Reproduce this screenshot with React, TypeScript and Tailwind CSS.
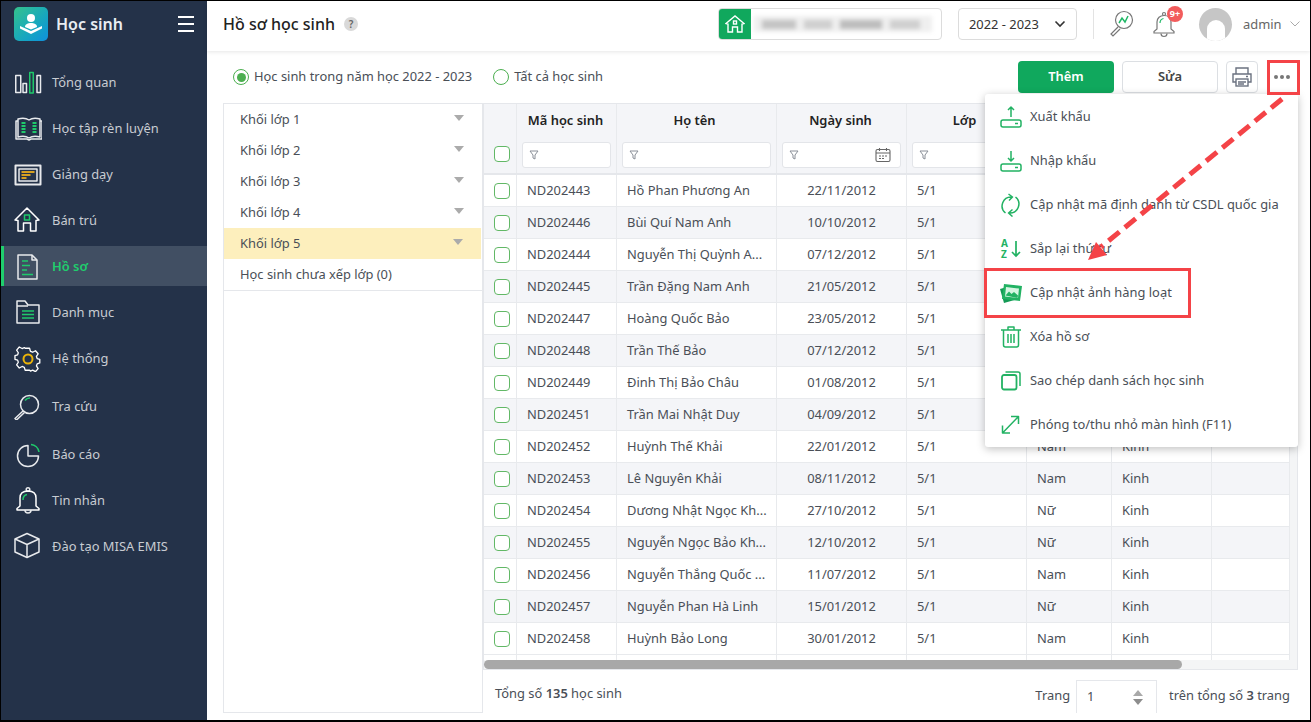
import type { ReactNode } from 'react'

const W = '#e8eaed'
const G = '#1fc96b'

function Svg({ size = 28, children }: { size?: number; children: ReactNode }) {
  return (
    <svg width={size} height={size} viewBox={`0 0 ${size} ${size}`} fill="none" strokeWidth="1.5" strokeLinejoin="round">
      {children}
    </svg>
  )
}

const navIcons: Record<string, ReactNode> = {
  overview: (
    <Svg>
      <rect x="1.75" y="7.5" width="5" height="17" stroke={W} />
      <rect x="9" y="15.5" width="3.5" height="9" stroke={W} />
      <rect x="15.75" y="4.5" width="3.5" height="20.5" stroke={G} />
      <rect x="23" y="7.5" width="3.5" height="17" stroke={W} />
    </Svg>
  ),
  study: (
    <Svg>
      <g transform="translate(1 2)">
        <path d="M3 5h-2v18h11l2 1 2-1h11V5h-2" stroke={W} />
        <path d="M3 3c4-1 8-1 11 1 3-2 7-2 11-1v18c-4-1-8-1-11 1-3-2-7-2-11-1z" stroke={W} />
        <path d="M6.5 7h4M6.5 10h4M6.5 13h4M6.5 16h4M17.5 7h4M17.5 10h4M17.5 13h4M17.5 16h4" stroke={G} strokeWidth="2" />
      </g>
    </Svg>
  ),
  teach: (
    <Svg>
      <rect x="1.5" y="5.5" width="25" height="19" stroke={W} strokeWidth="2" />
      <rect x="5" y="9" width="18" height="12" stroke={W} />
      <path d="M7.500 12h13M7.500 15h9M7.500 18h5" stroke="#d5a021" strokeWidth="2" />
    </Svg>
  ),
  boarding: (
    <Svg>
      <path d="M1 14 13 2 25 14l-3 .5V25h-5.500v-8h-7v8H4V14.500z" stroke="#fff" />
      <rect x="10.500" y="9" width="5" height="5" stroke={G} />
    </Svg>
  ),
  profile: (
    <Svg>
      <g transform="translate(0 1)">
        <path d="M4 2h14l5 5v19H4z" stroke={W} />
        <path d="M18 2v5h5" stroke={W} />
        <path d="M8 8h6M8 12.500h8M8 17h5M8 21.500h11" stroke={G} />
      </g>
    </Svg>
  ),
  category: (
    <Svg>
      <g transform="translate(-1 0)">
        <path d="M4 3h8l3 4h11v18H4z" stroke={W} />
        <path d="M4 8h11" stroke={W} />
        <path d="M9 13h12M9 16.500h12M9 20h12" stroke={G} />
      </g>
    </Svg>
  ),
  system: (
    <Svg>
      <g transform="translate(0 1)">
        <path
          d="M11 2h5l1 3.500 2.500 1 3.200-1.700 3 3.500-1.900 3 .8 2.400 3 1v4l-3 1-.8 2.400 1.900 3-3 3.500-3.200-1.700-2.500 1L16 27h-5l-1-3.300-2.500-1-3.200 1.700-3-3.500 1.900-3-.8-2.400-3-1v-4l3-1 .8-2.400-1.900-3 3-3.500 3.200 1.700 2.500-1z"
          transform="translate(1.500 1.500) scale(.88)"
          stroke="#fff"
        />
        <circle cx="14" cy="14" r="4.500" stroke="#eab308" strokeWidth="2" />
      </g>
    </Svg>
  ),
  search: (
    <Svg>
      <g transform="translate(-1 2)">
        <circle cx="16.500" cy="10.500" r="9" stroke={W} />
        <path d="M12 6.500a6 6 0 0 1 5-2.500" stroke={G} />
        <path d="M10 17 2 24.500 3.500 26l8-7.500" stroke={W} />
      </g>
    </Svg>
  ),
  report: (
    <Svg>
      <path d="M14 5.500a10.500 10.500 0 1 0 10.500 10.500H14z" stroke={W} />
      <path d="M17 4.500a9 9 0 0 1 8 7.500" stroke={G} />
    </Svg>
  ),
  message: (
    <Svg>
      <circle cx="14" cy="3.500" r="1.800" stroke={W} />
      <path d="M6 20v-8c0-5 3.500-7 8-7s8 2 8 7v8l3 2.500v1.500H3v-1.500z" stroke="#fff" />
      <path d="M11 24c0 2 1.500 3 3 3s3-1 3-3" stroke={W} />
      <path d="M9 14c0-3 1.500-5 4-5.500" stroke={G} />
    </Svg>
  ),
  training: (
    <Svg>
      <path d="M13 1.500 25 7v13L13 25.500 1 20V7z" stroke={W} />
      <path d="M1 7 13 12.500 25 7M13 12.500v13" stroke={W} />
    </Svg>
  ),
}

const navItems = [
  { label: 'Tổng quan', icon: 'overview' },
  { label: 'Học tập rèn luyện', icon: 'study' },
  { label: 'Giảng dạy', icon: 'teach' },
  { label: 'Bán trú', icon: 'boarding' },
  { label: 'Hồ sơ', icon: 'profile', active: true },
  { label: 'Danh mục', icon: 'category' },
  { label: 'Hệ thống', icon: 'system' },
  { label: 'Tra cứu', icon: 'search', shift: true },
  { label: 'Báo cáo', icon: 'report', shift: true },
  { label: 'Tin nhắn', icon: 'message' },
  { label: 'Đào tạo MISA EMIS', icon: 'training' },
]

const students = [
  ['ND202443', 'Hồ Phan Phương An', '22/11/2012', 'Nữ'],
  ['ND202446', 'Bùi Quí Nam Anh', '10/10/2012', 'Nam'],
  ['ND202444', 'Nguyễn Thị Quỳnh A...', '07/12/2012', 'Nữ'],
  ['ND202445', 'Trần Đặng Nam Anh', '21/05/2012', 'Nam'],
  ['ND202447', 'Hoàng Quốc Bảo', '23/05/2012', 'Nam'],
  ['ND202448', 'Trần Thế Bảo', '07/12/2012', 'Nam'],
  ['ND202449', 'Đinh Thị Bảo Châu', '01/08/2012', 'Nữ'],
  ['ND202451', 'Trần Mai Nhật Duy', '04/09/2012', 'Nam'],
  ['ND202452', 'Huỳnh Thế Khải', '22/01/2012', 'Nam'],
  ['ND202453', 'Lê Nguyên Khải', '08/11/2012', 'Nam'],
  ['ND202454', 'Dương Nhật Ngọc Kh...', '27/10/2012', 'Nữ'],
  ['ND202455', 'Nguyễn Ngọc Bảo Kh...', '12/10/2012', 'Nữ'],
  ['ND202456', 'Nguyễn Thắng Quốc ...', '11/07/2012', 'Nam'],
  ['ND202457', 'Nguyễn Phan Hà Linh', '15/01/2012', 'Nữ'],
  ['ND202458', 'Huỳnh Bảo Long', '30/01/2012', 'Nam'],
]

const grades = ['Khối lớp 1', 'Khối lớp 2', 'Khối lớp 3', 'Khối lớp 4', 'Khối lớp 5']

const MG = '#22b263'

const menuItems: { label: string; icon: ReactNode }[] = [
  {
    label: 'Xuất khẩu',
    icon: (
      <Svg size={24}>
        <rect x="2" y="15" width="20" height="7" rx="2" stroke={MG} />
        <path d="M12 12V2M9 5l3-3 3 3M16 18.500h3" stroke={MG} />
      </Svg>
    ),
  },
  {
    label: 'Nhập khẩu',
    icon: (
      <Svg size={24}>
        <rect x="2" y="15" width="20" height="7" rx="2" stroke={MG} />
        <path d="M12 2v10M9 9l3 3 3-3M16 18.500h3" stroke={MG} />
      </Svg>
    ),
  },
  {
    label: 'Cập nhật mã định danh từ CSDL quốc gia',
    icon: (
      <Svg size={24}>
        <path d="M13 4A9 9 0 0 0 7 20M10 1l4 3-3.500 3.500M11 20a9 9 0 0 0 6-16M14 16.500 10 20l4 3.500" stroke={MG} transform="translate(-.5 0)" />
      </Svg>
    ),
  },
  {
    label: 'Sắp lại thứ tự',
    icon: (
      <span className="flex items-center gap-[3px]">
        <span className="flex flex-col text-[10px] leading-[11px] font-bold text-[#22b263]">
          <span>A</span>
          <span>Z</span>
        </span>
        <svg width="10" height="17" viewBox="0 0 10 17" fill="none" stroke={MG} strokeWidth="1.700">
          <path d="M5 0v15M1 11l4 4 4-4" />
        </svg>
      </span>
    ),
  },
  {
    label: 'Cập nhật ảnh hàng loạt',
    icon: (
      <Svg size={24}>
        <path d="M1 8l14-4 4 14-14 4z" fill="#149a55" />
        <path d="M5 3l18 2-2 15-18-2z" fill={MG} />
        <path d="M7 6l13 1.500-1 9.500-13-1.500z" fill="#d6f5e2" />
        <path d="M6.500 14.500l3.500-4 2.500 2.500 2.500-2 4 3.500-.5 2.500z" fill={MG} />
      </Svg>
    ),
  },
  {
    label: 'Xóa hồ sơ',
    icon: (
      <Svg size={24}>
        <path d="M1 5h20M8 5V2h6v3M3.500 5v15a2 2 0 0 0 2 2h11a2 2 0 0 0 2-2V5M8 9v9M11 9v9M14 9v9" stroke={MG} transform="translate(1 0)" />
      </Svg>
    ),
  },
  {
    label: 'Sao chép danh sách học sinh',
    icon: (
      <Svg size={24}>
        <rect x="3" y="6" width="14.500" height="14.500" rx="2" stroke={MG} strokeWidth="1.800" />
        <path d="M6.500 3H19a2 2 0 0 1 2 2v12" stroke={MG} />
      </Svg>
    ),
  },
  {
    label: 'Phóng to/thu nhỏ màn hình (F11)',
    icon: (
      <Svg size={24}>
        <path d="M3.500 20 19 4M12 3.500h7.500V11M3.500 12.500V20H11" stroke={MG} />
      </Svg>
    ),
  },
]

function FilterIcon() {
  return (
    <svg width="10" height="10" viewBox="0 0 10 10" fill="none" stroke="#8a8f98" strokeWidth="1">
      <path d="M1 1h8L6 5v4L4 8V5z" />
    </svg>
  )
}

function Checkbox() {
  return <div className="h-4 w-4 rounded-[4px] border-[1.5px] border-[#62b866] bg-white" />
}

function FilterBox({ children }: { children?: ReactNode }) {
  return (
    <div className="mr-[5px] ml-[5px] flex h-[26px] flex-1 items-center justify-between rounded-[3px] border border-[#e3e5e9] bg-white pr-[10px] pl-[6px]">
      <FilterIcon />
      {children}
    </div>
  )
}

function Sidebar() {
  return (
    <aside className="flex w-[206px] shrink-0 flex-col bg-[#243249]">
      <div className="flex h-[50px] items-center pr-[13px] pb-1 pl-[13px]">
        <div className="flex h-[34px] w-[34px] items-center justify-center rounded-[5px] bg-gradient-to-br from-[#35c28a] to-[#1290dd]">
          <svg width="24" height="24" viewBox="0 0 24 24" fill="#fff">
            <circle cx="12" cy="6" r="4" />
            <path d="M6 15c0-3 3-4 6-4s6 1 6 4l-6 2.500z" />
            <path d="M1 14l11 5 11-5v2.500L12 22 1 16.500z" />
          </svg>
        </div>
        <span className="ml-2 flex-1 text-[16px] font-semibold text-[#e9edf2]">Học sinh</span>
        <div className="flex w-4 flex-col gap-[5px]">
          <div className="h-[2px] bg-white" />
          <div className="h-[2px] bg-white" />
          <div className="h-[2px] bg-white" />
        </div>
      </div>
      <nav className="mt-[11px] flex flex-col gap-[6px]">
        {navItems.map((item) => (
          <div
            key={item.label}
            className={`flex h-10 items-center gap-[10px] text-[12.9px] ${item.shift ? 'mt-[2px]' : ''} ${
              item.active ? 'border-l-[3px] border-[#1fce6d] bg-[#414f63] pl-[10px] font-semibold text-[#1fce6d]' : 'pl-[13px] text-[#c8ccd2]'
            }`}
          >
            <span className="flex w-7 shrink-0 justify-center">{navIcons[item.icon]}</span>
            <span className="mt-[2px]">{item.label}</span>
          </div>
        ))}
      </nav>
    </aside>
  )
}

function Topbar() {
  return (
    <header className="z-10 flex h-[50px] shrink-0 items-center bg-white pb-1 pl-4 shadow-[0_1px_4px_rgba(0,0,0,0.1)]">
      <div className="flex w-[479px] shrink-0 items-center">
        <h1 className="text-[16px] font-medium whitespace-nowrap text-[#222]">Hồ sơ học sinh</h1>
        <span className="ml-[9px] flex h-[14px] w-[14px] items-center justify-center rounded-full bg-[#d9d9d9] text-[10px] font-semibold text-[#666]">
          ?
        </span>
      </div>
      <div className="ml-4 flex h-8 w-[224px] shrink-0 items-center overflow-hidden rounded-[4px] border border-[#dcdcdc]">
        <div className="flex h-full w-[32px] items-center justify-center bg-[#10a85d]">
          <svg width="20" height="20" viewBox="0 0 20 20" fill="none" stroke="#fff" strokeWidth="1.400">
            <path d="M1 9.500 10 2l9 7.500-2 .5v8h-4.500v-5h-5v5H3v-8z" />
            <rect x="8.500" y="7" width="3" height="3" />
          </svg>
        </div>
        <div className="ml-[3px] flex h-4 w-[178px] items-center gap-2 bg-[#efefef] px-2 blur-[2px]">
          <div className="h-[9px] w-[34px] bg-[#c4c4c4]" />
          <div className="h-[9px] w-[28px] bg-[#cfcfcf]" />
          <div className="h-[9px] w-[42px] bg-[#bdbdbd]" />
          <div className="h-[9px] w-[30px] bg-[#cfcfcf]" />
        </div>
      </div>
      <div className="ml-4 flex h-8 w-[119px] shrink-0 items-center justify-between rounded-[4px] border border-[#dcdcdc] pr-[10px] pl-[10px] text-[12.9px] text-[#333]">
        <span className="mt-[2px]">2022 - 2023</span>
        <svg width="12" height="8" viewBox="0 0 12 8" fill="none" stroke="#333" strokeWidth="1.600">
          <path d="M1.500 1.500 6 6l4.500-4.500" />
        </svg>
      </div>
      <div className="ml-4 h-[30px] w-px bg-[#e3e3e3]" />
      <span className="ml-[14px] flex">
        <svg width="26" height="28" viewBox="0 0 26 28" fill="none" stroke="#777" strokeWidth="1.200">
          <circle cx="16" cy="10" r="8.500" />
          <path d="M10 17 3 24l2 2 7-7" />
          <path d="M11 13l3-5 3 4 3-6" stroke="#1fb866" strokeWidth="1.500" />
        </svg>
      </span>
      <span className="relative ml-[17px] flex">
        <svg width="26" height="28" viewBox="0 0 26 28" fill="none" stroke="#777" strokeWidth="1.200">
          <circle cx="13" cy="4" r="1.500" />
          <path d="M6 19v-7c0-4 3-6.500 7-6.500s7 2.500 7 6.500v7l3 2.500V23H3v-1.500z" />
          <path d="M10 23.500c0 2 1.500 3 3 3s3-1 3-3" />
          <path d="M9 13c0-2.500 1.500-4 3.500-4.500" stroke="#1fb866" />
        </svg>
        <span className="absolute -top-[4px] left-[16px] flex h-4 w-4 items-center justify-center rounded-full bg-[#f25c5c] text-[9px] font-bold text-white">
          9+
        </span>
      </span>
      <div className="ml-[22px] flex h-[33px] w-[33px] items-start justify-center overflow-hidden rounded-full bg-[#c6c6c6]">
        <div className="mt-[12px] h-[28px] w-[18px] rounded-full bg-white" />
      </div>
      <span className="mt-[2px] ml-[11px] text-[12.9px] text-[#666]">admin</span>
      <svg className="ml-2" width="10" height="6" viewBox="0 0 10 6" fill="none" stroke="#aaa" strokeWidth="1">
        <path d="M.5.5 5 5 9.500.5" />
      </svg>
    </header>
  )
}

function Toolbar() {
  return (
    <div className="flex h-[52px] shrink-0 items-center pr-3 pl-[26px] text-[12.9px] text-[#4a4f57]">
      <span className="flex h-4 w-4 items-center justify-center rounded-full border-[1.500px] border-[#4caf50]">
        <span className="h-[9px] w-[9px] rounded-full bg-[#4caf50]" />
      </span>
      <span className="ml-[5px]">Học sinh trong năm học 2022 - 2023</span>
      <span className="ml-[21px] h-4 w-4 rounded-full border-[1.500px] border-[#4caf50]" />
      <span className="ml-[5px]">Tất cả học sinh</span>
      <div className="ml-auto flex items-center">
        <button className="h-8 w-[96px] rounded-[4px] bg-[#10a85d] text-[12.9px] font-semibold text-white">Thêm</button>
        <button className="ml-2 h-8 w-[96px] rounded-[4px] border border-[#dcdfe3] bg-white text-[12.9px] font-semibold text-[#444]">
          Sửa
        </button>
        <button className="ml-2 flex h-8 w-8 items-center justify-center rounded-[4px] border border-[#dcdfe3] bg-white">
          <svg width="22" height="22" viewBox="0 0 22 22" fill="none" stroke="#6b7280" strokeWidth="1.400">
            <path d="M5 8V2h12v6M5 16H2V8h18v8h-3" />
            <rect x="5" y="13" width="12" height="7" />
            <path d="M15 10.500h2M7 16h8M7 18h6" />
          </svg>
        </button>
        <div className="ml-2 flex h-8 w-[32px] items-center justify-center gap-[2px]">
          <span className="h-1 w-1 rounded-full bg-[#777]" />
          <span className="h-1 w-1 rounded-full bg-[#777]" />
          <span className="h-1 w-1 rounded-full bg-[#777]" />
        </div>
      </div>
    </div>
  )
}

function GradeList() {
  return (
    <div className="flex w-[260px] shrink-0 flex-col border border-[#e5e7eb] text-[12.9px] text-[#4a4f57]">
      {grades.map((grade) => (
        <div
          key={grade}
          className={`flex h-[31px] items-center justify-between pr-[18px] pl-4 ${grade === 'Khối lớp 5' ? 'mr-px bg-[#fdefbd]' : ''}`}
        >
          <span>{grade}</span>
          <span className="mb-[4px] h-0 w-0 border-x-[5px] border-t-[6px] border-x-transparent border-t-[#ababab]" />
        </div>
      ))}
      <div className="flex h-[32px] items-center border-b border-[#e5e7eb] pl-4">Học sinh chưa xếp lớp (0)</div>
    </div>
  )
}

function Table() {
  const cols = ['w-[33px]', 'w-[100px]', 'w-[160px]', 'w-[130px]', 'w-[120px]', 'w-[85px]', 'w-[100px]', 'flex-1']
  const cell = 'flex h-full shrink-0 items-center border-r border-[#e8eaed]'
  return (
    <div className="flex min-w-0 flex-1 flex-col">
      <div className="flex min-h-0 flex-1">
        <div className="flex min-w-0 flex-1 flex-col overflow-hidden border-t border-l border-[#e5e7eb]">
          <div className="flex h-[33px] shrink-0 bg-[#f4f5f8] text-[12.9px] font-semibold text-[#222]">
            <div className={`${cell} ${cols[0]}`} />
            <div className={`${cell} ${cols[1]} justify-center pr-[2px]`}>Mã học sinh</div>
            <div className={`${cell} ${cols[2]} justify-center pr-1`}>Họ tên</div>
            <div className={`${cell} ${cols[3]} justify-center pr-[2px]`}>Ngày sinh</div>
            <div className={`${cell} ${cols[4]} justify-center pr-1`}>Lớp</div>
            <div className={`${cell} ${cols[5]} justify-center`}>Giới tính</div>
            <div className={`${cell} ${cols[6]} justify-center`}>Dân tộc</div>
            <div className={`${cell} ${cols[7]}`} />
          </div>
          <div className="flex h-[38px] shrink-0 border-b-2 border-[#e5e7eb] bg-[#f4f5f8]">
            <div className={`${cell} ${cols[0]} justify-center pb-[2px] pl-[3px]`}>
              <Checkbox />
            </div>
            <div className={`${cell} ${cols[1]}`}>
              <FilterBox />
            </div>
            <div className={`${cell} ${cols[2]}`}>
              <FilterBox />
            </div>
            <div className={`${cell} ${cols[3]}`}>
              <FilterBox>
                <svg className="-mr-[1px]" width="16" height="16" viewBox="0 0 16 16" fill="none" stroke="#666" strokeWidth="1.100">
                  <rect x="1" y="2.500" width="14" height="12" rx="1.500" />
                  <path d="M1 6h14M4.500 1v3M11.500 1v3M4 9h2M7 9h2M10 9h2M4 11.500h2M7 11.500h2" />
                </svg>
              </FilterBox>
            </div>
            <div className={`${cell} ${cols[4]}`}>
              <FilterBox />
            </div>
            <div className={`${cell} ${cols[5]}`}>
              <FilterBox />
            </div>
            <div className={`${cell} ${cols[6]}`}>
              <FilterBox />
            </div>
            <div className={`${cell} ${cols[7]}`} />
          </div>
          <div className="min-h-0 flex-1 overflow-hidden text-[12.9px] text-[#4a4f57]">
            {students.map((s, i) => (
              <div key={s[0]} className={`flex h-8 border-b border-[#e8eaed] ${i % 2 === 1 ? 'bg-[#f4f5f8]' : 'bg-white'}`}>
                <div className={`${cell} ${cols[0]} justify-center pl-[3px]`}>
                  <Checkbox />
                </div>
                <div className={`${cell} ${cols[1]} pl-[10px]`}>{s[0]}</div>
                <div className={`${cell} ${cols[2]} overflow-hidden pl-[10px] whitespace-nowrap`}>{s[1]}</div>
                <div className={`${cell} ${cols[3]} justify-center`}>{s[2]}</div>
                <div className={`${cell} ${cols[4]} pl-[10px]`}>5/1</div>
                <div className={`${cell} ${cols[5]} pl-[10px]`}>{s[3]}</div>
                <div className={`${cell} ${cols[6]} pl-[10px]`}>Kinh</div>
                <div className={`${cell} ${cols[7]}`} />
              </div>
            ))}
            <div className="flex h-8">
              {cols.map((c) => (
                <div key={c} className={`${cell} ${c}`} />
              ))}
            </div>
          </div>
        </div>
        <div className="w-2 shrink-0 border-t border-r border-[#e5e7eb] bg-[#f4f5f6]" />
      </div>
      <div className="flex h-[10px] shrink-0 border-x border-b border-[#e5e7eb] bg-[#f4f5f6]">
        <div className="h-[9px] w-[698px] rounded-full bg-[#a8a8a8]" />
      </div>
      <div className="flex h-[43px] shrink-0 items-center pt-1 pr-2 pl-3 text-[12.9px] text-[#4a4f57]">
        <span>
          Tổng số <b className="font-semibold">135</b> học sinh
        </span>
        <span className="mt-1 ml-auto">Trang</span>
        <div className="ml-[6px] flex h-[33px] w-[81px] items-center justify-between self-end border border-b-0 border-[#e5e7eb] pr-[13px] pl-[10px]">
          <span>1</span>
          <span className="flex flex-col gap-[3px]">
            <span className="h-0 w-0 border-x-[5px] border-b-[6px] border-x-transparent border-b-[#a9a9a9]" />
            <span className="h-0 w-0 border-x-[5px] border-t-[6px] border-x-transparent border-t-[#8d8d8d]" />
          </span>
        </div>
        <span className="mt-1 ml-3">
          trên tổng số <b className="font-semibold">3</b> trang
        </span>
      </div>
    </div>
  )
}

function ActionMenu() {
  return (
    <div className="absolute top-[93px] left-[984px] z-20 w-[313px] rounded-[3px] bg-white pt-px text-[12.9px] text-[#4a4f57] shadow-[0_2px_8px_rgba(0,0,0,0.25)]">
      {menuItems.map((item) => (
        <div key={item.label} className="flex h-11 items-center">
          <span className="ml-[14px] flex w-[24px] justify-center">{item.icon}</span>
          <span className="ml-[7px]">{item.label}</span>
        </div>
      ))}
    </div>
  )
}

function Annotations() {
  return (
    <>
      <div className="absolute top-[59px] left-[1266px] z-30 h-[35px] w-[33px] border-[3px] border-[#f44347]" />
      <div className="absolute top-[267px] left-[983px] z-30 h-[50px] w-[207px] border-[3px] border-[#f44347]" />
      <svg className="absolute top-0 left-0 z-30" width="1309" height="720" fill="none">
        <path d="M1281 98 1100 246" stroke="#f44347" strokeWidth="5" strokeDasharray="14 7" />
        <path d="M1087 259 1095 241 1106 254z" fill="#f44347" />
      </svg>
    </>
  )
}

export default function App() {
  return (
    <div className="relative flex h-[722px] w-[1311px] overflow-hidden border-t border-r border-b-2 border-l border-black bg-white font-['Noto_Sans','Open_Sans',sans-serif]">
      <Sidebar />
      <main className="flex min-w-0 flex-1 flex-col">
        <Topbar />
        <Toolbar />
        <div className="flex min-h-0 flex-1 pr-[12px] pb-[7px] pl-4">
          <GradeList />
          <Table />
        </div>
      </main>
      <ActionMenu />
      <Annotations />
    </div>
  )
}
